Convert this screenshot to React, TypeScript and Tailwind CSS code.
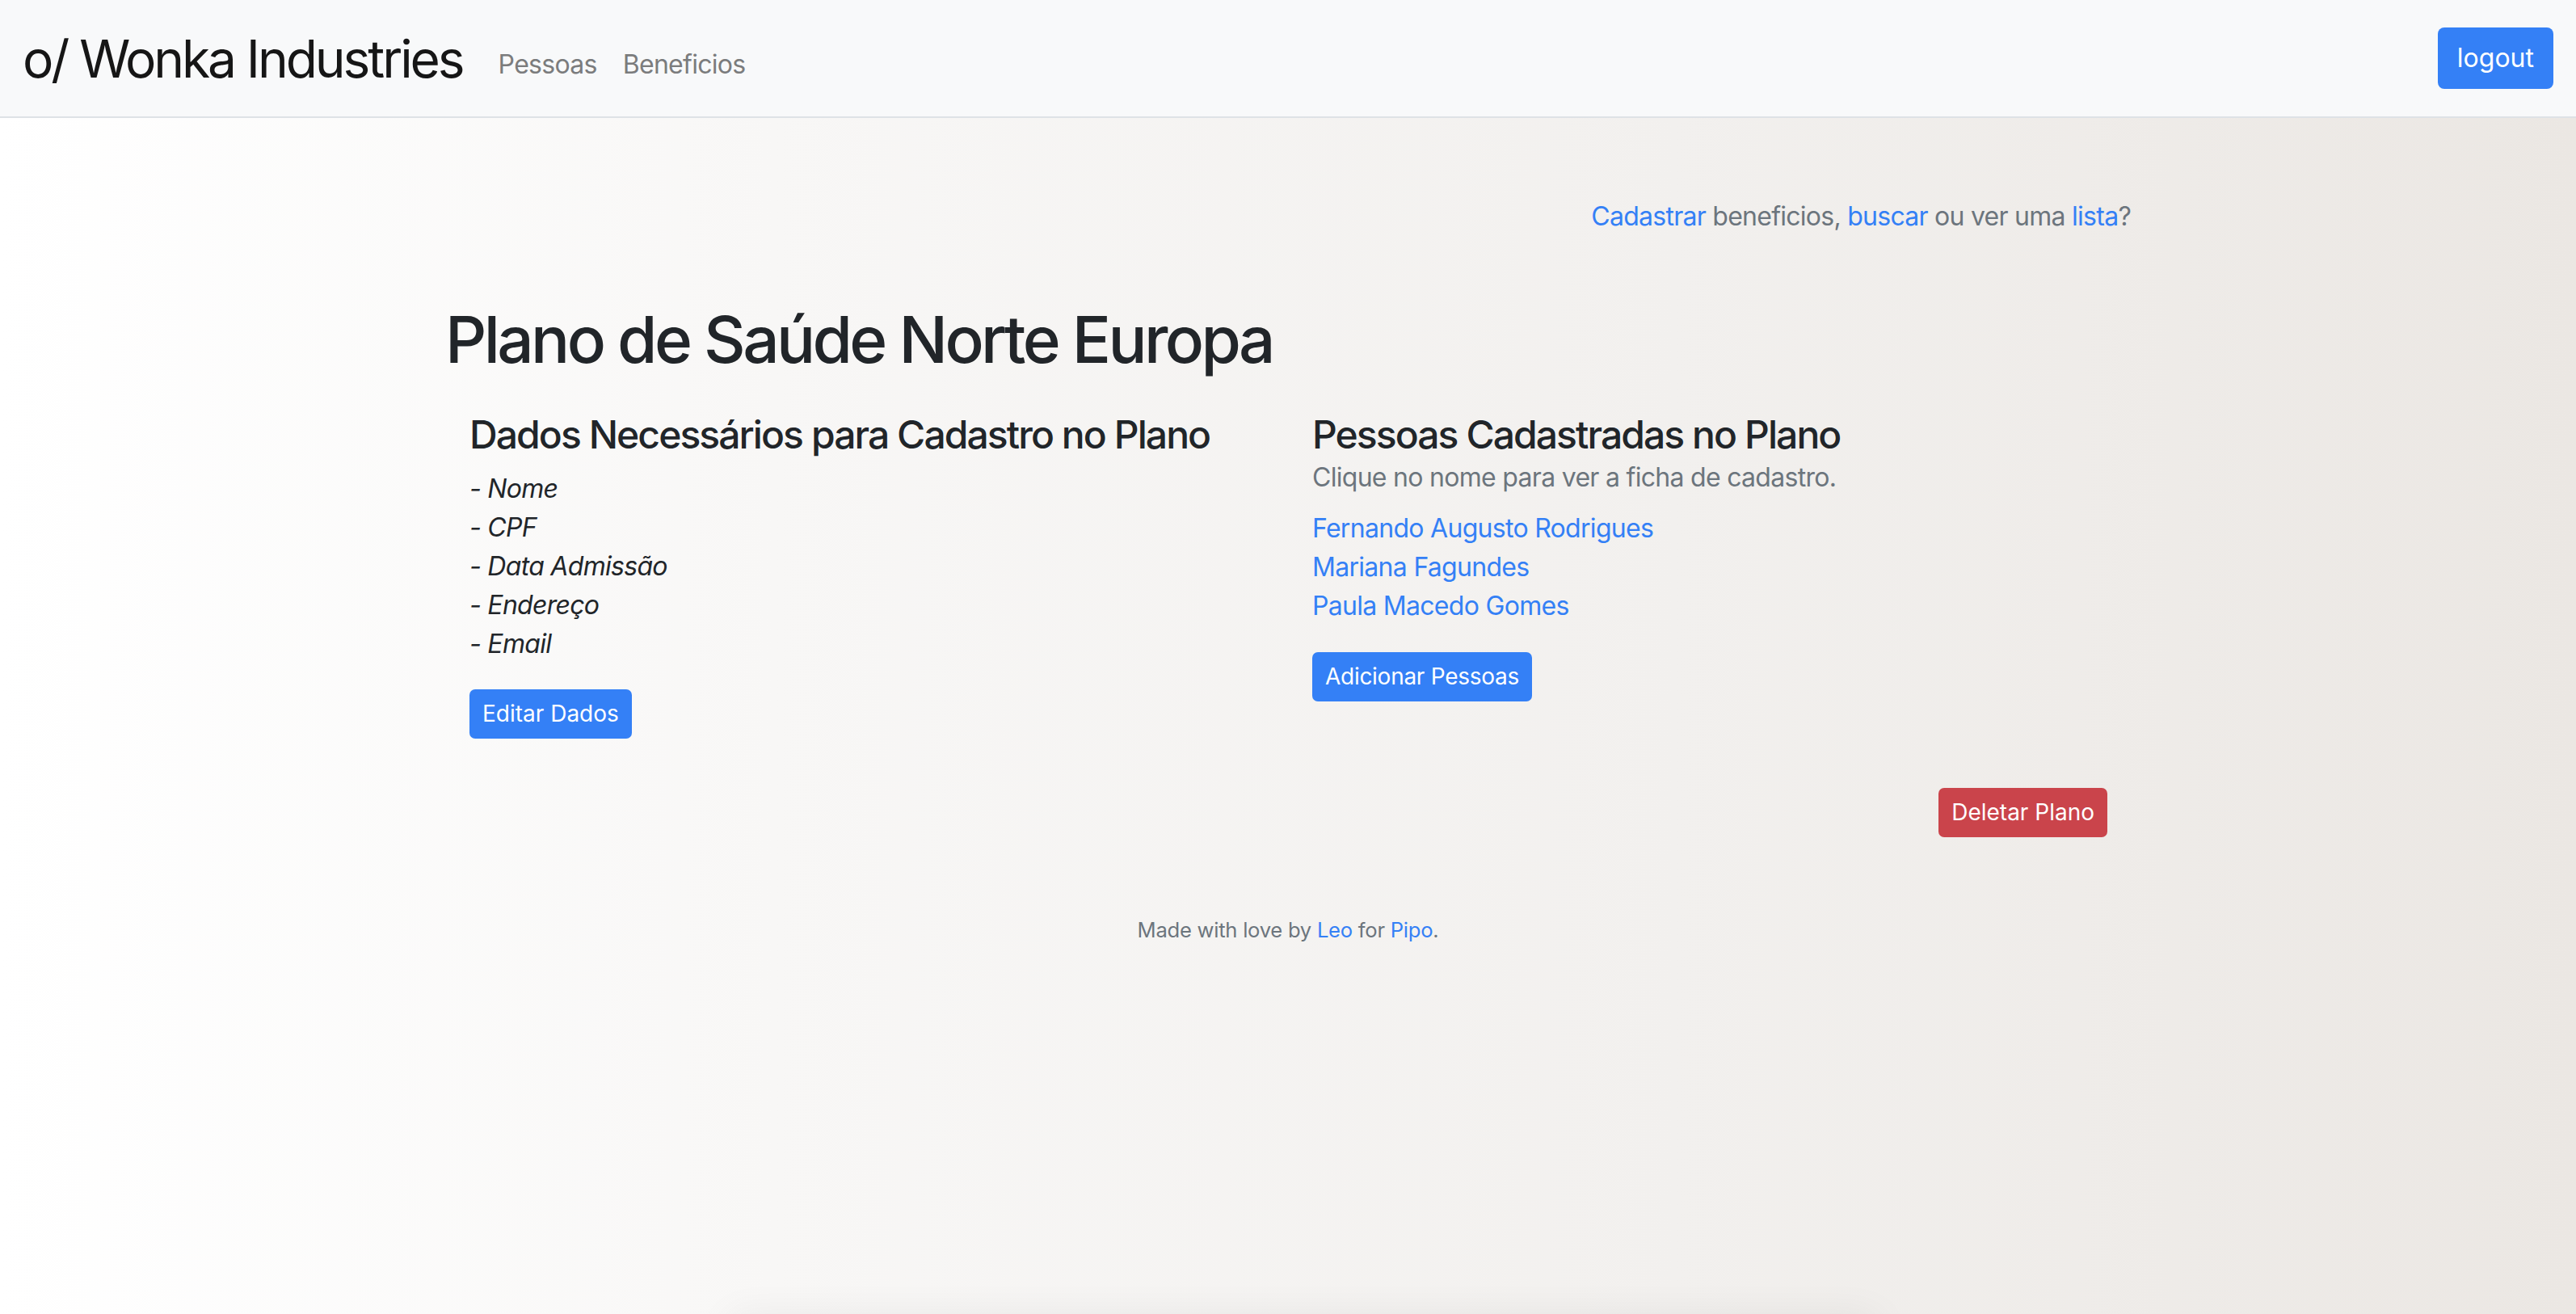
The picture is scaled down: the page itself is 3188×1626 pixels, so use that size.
import React from "react";

const people = ["Fernando Augusto Rodrigues", "Mariana Fagundes", "Paula Macedo Gomes"];
const fields = ["Nome", "CPF", "Data Admissão", "Endereço", "Email"];

export default function App() {
  return (
    <div className="relative min-h-screen overflow-hidden bg-[linear-gradient(to_right,#ffffff_0%,#f8f7f6_30%,#f2f0ee_65%,#ebe7e3_100%)] font-[Inter,'Noto_Sans',sans-serif] text-[#212529]">
      <nav className="flex h-[146px] items-center border-b-2 border-[#dee2e6] bg-[#f8f9fa] pl-[28px] pr-[28px]">
        <a href="#" className="mt-[2px] text-[64px] leading-none tracking-[-0.048em] text-[#161616]">
          o/ Wonka Industries
        </a>
        <div className="ml-[44px] mt-[15px] flex gap-[32px] text-[32px] tracking-[-0.022em] text-[#7b7c7d]">
          <a href="#">Pessoas</a>
          <a href="#">Beneficios</a>
        </div>
        <button
          type="button"
          className="ml-auto flex h-[76px] items-center rounded-[8px] bg-[#3480f6] px-[24px] text-[32px] text-white"
        >
          logout
        </button>
      </nav>

      <main className="mx-auto w-[2086px]">
        <p className="mt-[98px] text-right text-[32px] leading-[48px] tracking-[-0.023em] text-[#6c757d]">
          <a href="#" className="text-[#3480f6]">Cadastrar</a> beneficios,{" "}
          <a href="#" className="text-[#3480f6]">buscar</a> ou ver uma{" "}
          <a href="#" className="text-[#3480f6]">lista</a>?
        </p>

        <h1 className="mt-[80px] text-[80px] font-medium leading-[1.2] tracking-[-0.045em]">
          Plano de Saúde Norte Europa
        </h1>

        <div className="mt-[41px] grid grid-cols-2">
          <div className="px-[30px]">
            <h4 className="mb-[14px] whitespace-nowrap text-[48px] font-medium leading-[1.2] tracking-[-0.04em]">
              Dados Necessários para Cadastro no Plano
            </h4>
            <ul className="text-[32px] italic leading-[48px] tracking-[-0.022em]">
              {fields.map((f) => (
                <li key={f}>- {f}</li>
              ))}
            </ul>
            <button
              type="button"
              className="mt-[32px] flex h-[61px] items-center rounded-[7px] bg-[#3480f6] px-[16px] text-[28px] text-white"
            >
              Editar Dados
            </button>
          </div>

          <div className="px-[30px]">
            <h4 className="whitespace-nowrap text-[48px] font-medium leading-[1.2] tracking-[-0.04em]">
              Pessoas Cadastradas no Plano
            </h4>
            <p className="text-[32px] leading-[48px] tracking-[-0.022em] text-[#6c757d]">
              Clique no nome para ver a ficha de cadastro.
            </p>
            <div className="mt-[15px] flex flex-col text-[32px] leading-[48px] tracking-[-0.022em]">
              {people.map((p) => (
                <a key={p} href="#" className="text-[#3480f6]">
                  {p}
                </a>
              ))}
            </div>
            <button
              type="button"
              className="mt-[33px] flex h-[61px] items-center rounded-[7px] bg-[#3480f6] px-[16px] text-[28px] tracking-[-0.01em] text-white"
            >
              Adicionar Pessoas
            </button>
          </div>
        </div>

        <div className="mt-[61px] flex justify-end px-[29px]">
          <button
            type="button"
            className="flex h-[61px] items-center rounded-[7px] bg-[#ca444b] px-[16px] text-[28px] text-white"
          >
            Deletar Plano
          </button>
        </div>

        <footer className="mt-[94px] text-center text-[25.6px] leading-[42px] tracking-[-0.01em] text-[#6c757d]">
          Made with love by <a href="#" className="text-[#3480f6]">Leo</a> for{" "}
          <a href="#" className="text-[#3480f6]">Pipo</a>.
        </footer>
      </main>

      <div className="absolute left-[900px] right-[860px] top-[1640px] h-[40px] rounded-[40px] shadow-[0_-10px_50px_rgba(0,0,0,0.07)]" />
    </div>
  );
}
